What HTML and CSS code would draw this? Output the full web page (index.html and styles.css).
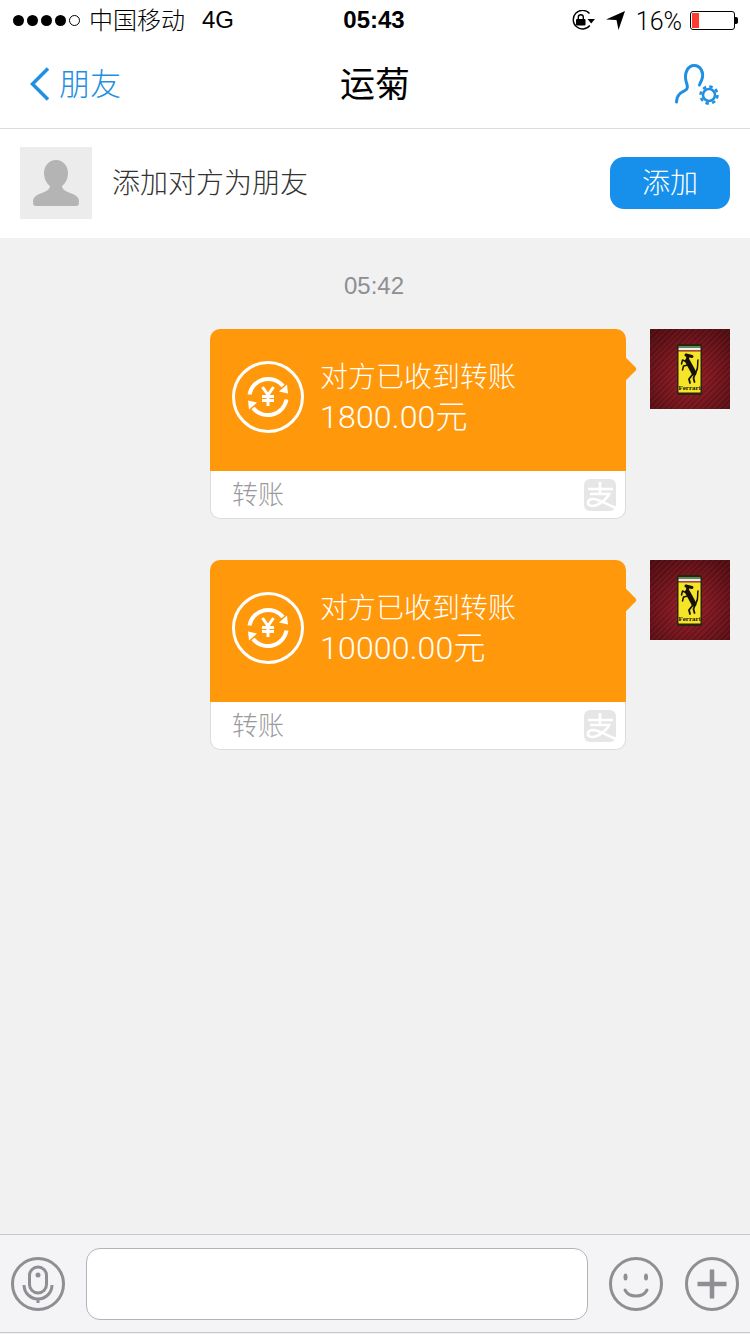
FILE: index.html
```html
<!DOCTYPE html>
<html lang="zh-CN">
<head>
<meta charset="utf-8">
<title>运菊</title>
<link rel="stylesheet" href="styles.css">
</head>
<body>
<svg class="defs" aria-hidden="true">
  <symbol id="transfer" viewBox="0 0 72 72">
    <circle cx="36" cy="36" r="34.500" fill="none" stroke="#fff" stroke-width="3"/>
    <path d="M17.500 33.500A19 19 0 0 1 51 25" fill="none" stroke="#fff" stroke-width="4"/>
    <path d="M54.500 38.500A19 19 0 0 1 21 47" fill="none" stroke="#fff" stroke-width="4"/>
    <path d="M47 30.500 56 32.500 55 23.500Z M25 41.500 16 39.500 17 48.500Z" fill="#fff"/>
    <path d="M30.500 26 36 34 41.500 26M30 35.500H42M30 39.500H42M36 34V45" fill="none" stroke="#fff" stroke-width="3"/>
  </symbol>
  <symbol id="alipay" viewBox="0 0 32 32">
    <rect width="32" height="32" rx="6" fill="#e6e6e6"/>
    <path d="M4 10H29M16 3V14M6 15H25C23 20 14 27 8 27C2 27 3 20 9 20C15 20 24 26 32 29" fill="none" stroke="#fff" stroke-width="2.600"/>
  </symbol>
  <symbol id="ferrari" viewBox="0 0 80 80">
    <rect x="27" y="15" width="25" height="51" rx="2" fill="#2c2210"/>
    <rect x="28.500" y="17" width="22" height="2" fill="#5b8a5e"/>
    <rect x="28.500" y="19" width="22" height="2" fill="#eeeeea"/>
    <rect x="28.500" y="21" width="22" height="1.500" fill="#b8423a"/>
    <rect x="28.500" y="22.500" width="22" height="41" fill="#f6e428"/>
    <g fill="none" stroke="#14110c" stroke-linecap="round" stroke-linejoin="round">
      <path d="M37.500 32 44 44" stroke-width="5"/>
      <path d="M37 32 38 27M36 26 42 27.500" stroke-width="3"/>
      <path d="M37 33 32.500 31 31.500 35M38 36 33.500 37 32.500 41" stroke-width="1.500"/>
      <path d="M43 45 39 50 40 54M45 45 43.500 49 44.500 53" stroke-width="1.800"/>
      <path d="M46 43C49 38 47 35 48 31" stroke-width="1.500"/>
    </g>
  </symbol>
</svg>
<div class="screen">
  <header class="status">
    <div class="status-left">
      <div class="signal"><i class="dot"></i><i class="dot"></i><i class="dot"></i><i class="dot"></i><i class="dot dot-empty"></i></div>
      <span class="carrier">中国移动</span>
      <span class="net">4G</span>
    </div>
    <div class="clock">05:43</div>
    <div class="status-right">
      <svg class="ico-lock" width="24" height="20" viewBox="0 0 24 20">
        <path d="M18.500 3.500A9.300 9.300 0 1 0 18.800 15.500" fill="none" stroke="#000" stroke-width="1.400"/>
        <path d="M16.500 9H24L20.200 13.500Z" fill="#000"/>
        <rect x="5" y="9" width="9.500" height="6.500" rx="1" fill="#000"/>
        <path d="M7.300 9V7.200a2.500 2.500 0 0 1 5 0V9" fill="none" stroke="#000" stroke-width="1.400"/>
      </svg>
      <svg class="ico-loc" width="19" height="19" viewBox="0 0 19 19"><path d="M0 8.500 19 0 12.500 19 10.500 9Z" fill="#000"/></svg>
      <span class="pct">16%</span>
      <div class="battery"><div class="battery-fill"></div></div>
    </div>
  </header>

  <nav class="nav">
    <div class="nav-back">
      <svg width="20" height="34" viewBox="0 0 20 34"><path d="M18 1.500 2.500 17 18 32.500" fill="none" stroke="#1f8fe3" stroke-width="3.500"/></svg>
      <span class="nav-back-text">朋友</span>
    </div>
    <h1 class="nav-title">运菊</h1>
    <div class="nav-right">
      <svg class="nav-ico" width="46" height="42" viewBox="0 0 46 42">
        <path d="M2.500 38C2.500 30 8 28 11 26.500C15 24.500 13 21 12 17C10 9 14 1.500 20 1.500C27 1.500 30 9 28 15C27.500 17 26 19 25.500 21" fill="none" stroke="#1f8fe3" stroke-width="3" stroke-linecap="round"/>
        <circle cx="35" cy="31" r="6" fill="none" stroke="#1f8fe3" stroke-width="2.500"/>
        <circle cx="35" cy="31" r="8.500" fill="none" stroke="#1f8fe3" stroke-width="2.500" stroke-dasharray="3.500 3.176"/>
      </svg>
    </div>
  </nav>

  <section class="addbar">
    <div class="addbar-avatar">
      <svg width="48" height="48" viewBox="0 0 48 48"><path d="M24 1C31 1 36 7 36 14C36 20 33 25 30 27C30 30 33 32 38 34C44 36 47 38 47 43C47 46 46 47 44 47H4C2 47 1 46 1 43C1 38 4 36 10 34C15 32 18 30 18 27C15 25 12 20 12 14C12 7 17 1 24 1Z" fill="#b4b4b4"/></svg>
    </div>
    <span class="addbar-text">添加对方为朋友</span>
    <button class="addbar-btn">添加</button>
  </section>

  <main class="chat">
    <div class="time">05:42</div>
    <div class="msg">
      <article class="bubble">
        <div class="bubble-main">
          <svg class="bubble-ico" width="72" height="72"><use href="#transfer"/></svg>
          <div class="bubble-text">
            <div class="bubble-status">对方已收到转账</div>
            <div class="bubble-amount">1800.00元</div>
          </div>
        </div>
        <div class="bubble-foot">
          <span class="bubble-label">转账</span>
          <svg width="32" height="32"><use href="#alipay"/></svg>
        </div>
      </article>
      <div class="avatar"><svg width="80" height="80"><use href="#ferrari"/></svg><span class="avatar-label">Ferrari</span></div>
    </div>
    <div class="msg">
      <article class="bubble">
        <div class="bubble-main">
          <svg class="bubble-ico" width="72" height="72"><use href="#transfer"/></svg>
          <div class="bubble-text">
            <div class="bubble-status">对方已收到转账</div>
            <div class="bubble-amount">10000.00元</div>
          </div>
        </div>
        <div class="bubble-foot">
          <span class="bubble-label">转账</span>
          <svg width="32" height="32"><use href="#alipay"/></svg>
        </div>
      </article>
      <div class="avatar"><svg width="80" height="80"><use href="#ferrari"/></svg><span class="avatar-label">Ferrari</span></div>
    </div>
  </main>

  <footer class="inputbar">
    <svg width="54" height="54" viewBox="0 0 54 54">
      <g fill="none" stroke="#8e8e93" stroke-width="3">
        <circle cx="27" cy="27" r="25.500"/>
        <rect x="18.500" y="10" width="17" height="26" rx="8.500"/>
        <path d="M13 28a14 14 0 0 0 28 0M27 42V46"/>
      </g>
      <circle cx="27" cy="18" r="2.500" fill="#8e8e93"/>
    </svg>
    <div class="inputbox"></div>
    <svg width="54" height="54" viewBox="0 0 54 54">
      <g fill="none" stroke="#8e8e93" stroke-width="3">
        <circle cx="27" cy="27" r="25.500"/>
        <path d="M16 33C20 41 34 41 38 33" stroke-linecap="round"/>
      </g>
      <ellipse cx="16.500" cy="20" rx="2" ry="3.500" fill="#8e8e93"/>
      <ellipse cx="37" cy="20" rx="2" ry="3.500" fill="#8e8e93"/>
    </svg>
    <svg class="btn-plus" width="54" height="54" viewBox="0 0 54 54">
      <g fill="none" stroke="#8e8e93">
        <circle cx="27" cy="27" r="25.500" stroke-width="3"/>
        <path d="M12.500 27H41.500M27 12.500V41.500" stroke-width="4.500"/>
      </g>
    </svg>
  </footer>
</div>
</body>
</html>
```
FILE: styles.css
```css
* { box-sizing: border-box; }
html, body { margin: 0; padding: 0; }
body {
  font-family: "Liberation Sans", "Noto Sans CJK SC", sans-serif;
  background: #f1f1f2;
}
.defs { display: none; }
.screen {
  width: 750px;
  height: 1334px;
  display: flex;
  flex-direction: column;
  overflow: hidden;
  background: #f1f1f2;
}

/* status bar */
.status {
  height: 40px;
  background: #fff;
  display: grid;
  grid-template-columns: 1fr auto 1fr;
  align-items: center;
  padding: 0 15px 0 13px;
  color: #000;
  font-size: 24px;
}
.status-left { display: flex; align-items: center; }
.signal { display: flex; gap: 3px; margin-right: 9px; }
.dot { width: 11px; height: 11px; border-radius: 50%; background: #000; }
.dot-empty { background: #fff; border: 1px solid #000; }
.carrier { font-weight: 300; width: 113px; line-height: 30px; padding-top: 2px; }
.net { line-height: 30px; }
.clock { font-weight: 700; line-height: 30px; }
.status-right { display: flex; align-items: center; justify-content: flex-end; }
.ico-lock { margin-right: 11px; }
.ico-loc { margin-right: 11px; }
.pct { font-family: Roboto, sans-serif; font-weight: 300; font-size: 25px; margin-right: 8px; line-height: 30px; padding-top: 3px; }
.battery {
  position: relative;
  width: 45px;
  height: 19px;
  border: 1px solid #000;
  border-radius: 3px;
  padding: 1px;
}
.battery::after {
  content: "";
  position: absolute;
  right: -4px;
  top: 5px;
  width: 3px;
  height: 7px;
  background: #000;
  border-radius: 0 2px 2px 0;
}
.battery-fill { width: 7px; height: 100%; background: #ff3b30; }

/* nav */
.nav {
  height: 89px;
  background: #fff;
  border-bottom: 1px solid #dcdcdc;
  display: grid;
  grid-template-columns: 1fr auto 1fr;
  align-items: center;
  padding: 0 30px;
}
.nav-back {
  display: flex;
  align-items: center;
  gap: 9px;
  color: #1f8fe3;
  font-size: 31px;
  font-weight: 300;
}
.nav-back-text { padding-bottom: 6px; }
.nav-title { margin: 0; padding-bottom: 6px; font-size: 35px; font-weight: 400; color: #000; }
.nav-right { display: flex; justify-content: flex-end; }
.nav-ico { margin-top: 2px; }

/* add friend */
.addbar {
  height: 109px;
  background: #fff;
  display: flex;
  align-items: center;
  padding: 0 20px 2px;
}
.addbar-avatar {
  width: 72px;
  height: 72px;
  background: #ececec;
  display: flex;
  align-items: center;
  justify-content: center;
}
.addbar-text {
  flex: 1;
  margin-left: 20px;
  padding-bottom: 4px;
  font-size: 28px;
  font-weight: 300;
  color: #333;
}
.addbar-btn {
  width: 120px;
  height: 52px;
  border: 0;
  padding: 0 0 4px;
  border-radius: 14px;
  background: #1790eb;
  color: #fff;
  font: inherit;
  font-size: 28px;
  font-weight: 300;
}

/* chat */
.chat { flex: 1; padding-top: 32px; }
.time {
  height: 32px;
  line-height: 32px;
  margin-bottom: 27px;
  padding-right: 2px;
  text-align: center;
  font-size: 24px;
  color: #8e8e93;
}
.msg {
  display: flex;
  justify-content: flex-end;
  align-items: flex-start;
  gap: 24px;
  padding-right: 20px;
  margin-bottom: 41px;
}
.bubble {
  position: relative;
  width: 416px;
  height: 190px;
  display: flex;
  flex-direction: column;
}
.bubble::after {
  content: "";
  position: absolute;
  right: -8px;
  top: 32px;
  width: 16px;
  height: 16px;
  background: #ff980b;
  border-radius: 0 3px 0 0;
  transform: rotate(45deg);
}
.bubble-main {
  height: 142px;
  background: #ff980b;
  border-radius: 10px 10px 0 0;
  display: flex;
  align-items: center;
  gap: 16px;
  padding: 0 22px 6px;
  color: #fff;
}
.bubble-status { font-size: 28px; font-weight: 300; line-height: 40px; padding-top: 1px; }
.bubble-amount { font-family: Roboto, "Noto Sans CJK SC", sans-serif; font-size: 32px; font-weight: 300; line-height: 39px; letter-spacing: .2px; }
.bubble-foot {
  flex: 1;
  background: #fff;
  border: 1px solid #dcdcdc;
  border-top: 0;
  border-radius: 0 0 10px 10px;
  display: flex;
  align-items: center;
  justify-content: space-between;
  padding: 0 9px 0 21px;
  font-size: 26px;
  font-weight: 300;
  color: #9a9a9e;
}
.bubble-label { padding-bottom: 4px; }
.avatar {
  position: relative;
  width: 80px;
  height: 80px;
  background:
    radial-gradient(circle at 50% 60%, rgba(190, 40, 50, .5), rgba(60, 10, 12, .55) 90%),
    repeating-linear-gradient(135deg, #7f1b24 0 2px, #591118 2px 4px);
}
.avatar svg { display: block; }
.avatar-label {
  position: absolute;
  left: 28px;
  top: 56px;
  width: 23px;
  text-align: center;
  font-size: 7px;
  line-height: 7px;
  font-weight: 700;
  color: #14110c;
  font-family: "Liberation Serif", serif;
}

/* input bar */
.inputbar {
  height: 99px;
  margin-bottom: 1px;
  background: #f4f4f6;
  border-top: 1px solid #c8c8cc;
  border-bottom: 1px solid #c8c8cc;
  display: flex;
  align-items: center;
  gap: 21px;
  padding: 0 11px;
}
.inputbox {
  flex: 1;
  height: 72px;
  background: #fff;
  border: 1px solid #b4b4b8;
  border-radius: 14px;
}
.btn-plus { margin-left: 1px; }
```
